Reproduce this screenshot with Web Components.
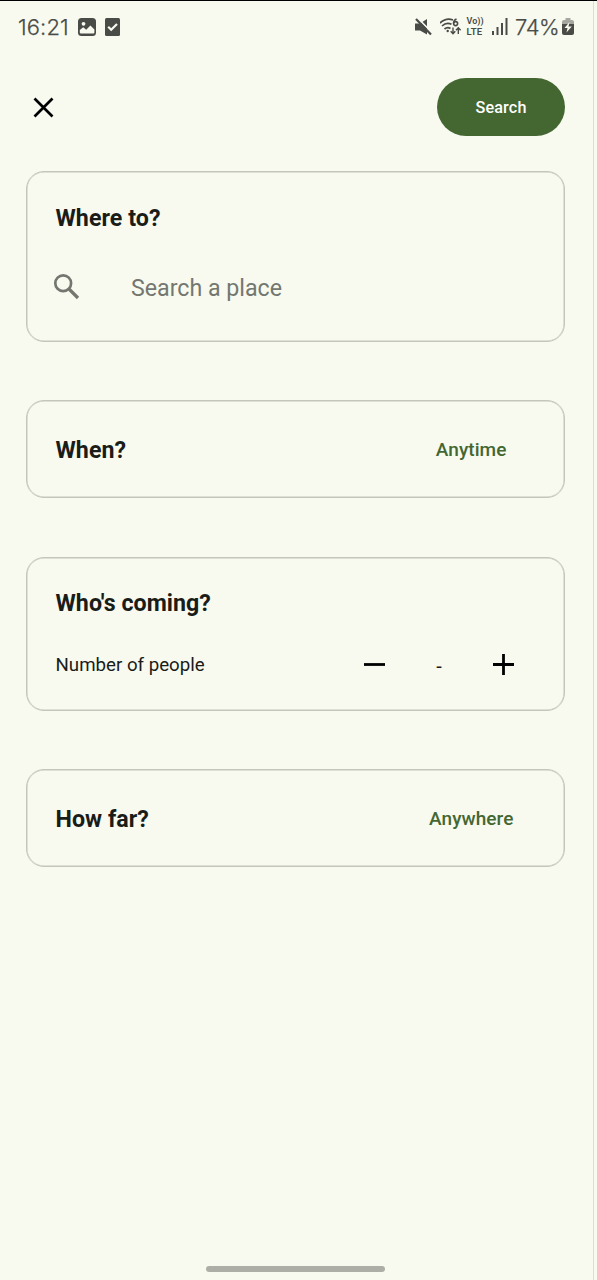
<!DOCTYPE html>
<html lang="en">
<head>
<meta charset="utf-8">
<title>Search</title>
<style>
html,body{margin:0;height:100%;background:#f8faf0}
body{font-family:Roboto,"Noto Sans",sans-serif;color:#1a1c18;overflow:hidden}
</style>
</head>
<body>
<search-screen></search-screen>
<script>
const define = (name, html) => customElements.define(name, class extends HTMLElement {
  constructor() {
    super();
    this.attachShadow({mode: 'open'}).innerHTML = html;
  }
});

define('status-bar', `
<style>
:host{display:flex;align-items:center;height:51px;box-sizing:border-box;padding:0 23px 0 18px;color:#494b46;font:22.5px/26px Inter,sans-serif}
.time{width:51px;margin-right:9px;font-weight:300;white-space:nowrap;font-size:22px;letter-spacing:.1px;-webkit-text-stroke:.25px}
.pct{width:44px;margin-left:7px;margin-right:3px;font-weight:300;white-space:nowrap;font-size:22px;letter-spacing:-.4px;-webkit-text-stroke:.25px}
svg{display:block;flex:none}
.space{flex:1}
.volte{display:flex;flex-direction:column;gap:1px;width:18px;margin-left:3.500px;margin-right:7.500px;font:600 9px/9px Roboto,sans-serif;white-space:nowrap}
.volte span+span{font-size:9.500px;line-height:9px;letter-spacing:.2px}
</style>
<span class="time">16:21</span>
<svg width="18" height="18" viewBox="0 0 18 18"><rect width="18" height="18" rx="3.500" fill="#494b46"/><circle cx="5.500" cy="5.800" r="1.900" fill="#f8faf0"/><path d="M1.800 14.500V12l3.400-2.700 3 2.400L12.400 7.500l4 4v3q0 1-1 1H3q-1.200 0-1.200-1z" fill="#f8faf0"/></svg>
<svg width="15" height="18" viewBox="0 0 15 18" style="margin-left:9px"><rect width="15" height="18" rx="1.500" fill="#494b46"/><path d="M3.200 8.700l3 3L12 6" fill="none" stroke="#f8faf0" stroke-width="2.200"/></svg>
<span class="space"></span>
<svg width="18" height="18" viewBox="0 0 18 18" style="margin-right:1px"><path d="M0 5.500h5L12 1v15.500L5 12.500H0z" fill="#494b46"/><path d="M2.500 0L18 15.500" stroke="#f8faf0" stroke-width="1.600"/><path d="M1 1L16 16.500" stroke="#494b46" stroke-width="2.200"/></svg>
<svg width="22" height="20" viewBox="0 0 22 20" style="margin-left:6px;margin-right:1px" fill="none" stroke="#494b46"><path d="M0 6Q6 .5 13 3M2 9Q6.500 4.800 11.500 7.300M4.500 12Q7.500 9.500 10.500 11.500" stroke-width="1.700"/><circle cx="7.700" cy="14" r="1.200" fill="#494b46" stroke="none"/><circle cx="15.600" cy="6.600" r="2" stroke-width="1.600"/><path d="M16.500 2Q13.500 3 13.600 6.600" stroke-width="1.600"/><path d="M13 10.500v6M10.700 14.200l2.300 2.500 2.300-2.500M18.300 17v-6M16 13.200l2.300-2.500 2.300 2.500" stroke-width="1.400"/></svg>
<span class="volte"><span>Vo))</span><span>LTE</span></span>
<svg width="16" height="17" viewBox="0 0 16 17" fill="#494b46"><path d="M0 13h2v4H0zM4.500 9h2v8h-2zM9 5h2v12H9zM13.500 0h2v17h-2z"/></svg>
<span class="pct">74%</span>
<svg width="12" height="17" viewBox="0 0 12 17"><path d="M3.500 0h5v2H10q2 0 2 2v4H0V4q0-2 2-2h1.500z" fill="#a6a8a0"/><path d="M0 6h12v9q0 2-2 2H2q-2 0-2-2z" fill="#494b46"/><path d="M7.500 4L2.500 10h3l-1 4.500L9.800 8.500H6.500z" fill="#f8faf0"/></svg>
`);

define('pill-button', `
<style>
:host{display:flex;align-items:center;justify-content:center;width:128px;height:58.500px;border-radius:30px;background:#446732;color:#fff;font-size:16.200px;font-weight:500;letter-spacing:.15px}
</style><slot></slot>`);

define('option-card', `
<style>
:host{display:flex;flex-direction:column;box-sizing:border-box;border:1px solid #c3c6bc;box-shadow:inset 0 0 0 .5px #c3c6bc;border-radius:18px;padding:0 28.500px}
h2{margin:0;font-size:23.200px;line-height:28px;font-weight:700;white-space:nowrap;letter-spacing:.05px}
.head{display:flex;align-items:center;justify-content:space-between}
::slotted([slot=action]){color:#446732;font-size:19px;font-weight:500;letter-spacing:.08px;padding-bottom:1px}
</style>
<div class="head"><h2><slot name="title"></slot></h2><slot name="action"></slot></div>
<slot></slot>`);

define('place-field', `
<style>
:host{display:flex;align-items:center;height:36px;margin-top:38px;color:#74776f;font-size:23.200px}
svg{margin-left:-3px;margin-right:51.500px;margin-top:-4px}
</style>
<svg width="27" height="27" viewBox="0 0 27 27" fill="none" stroke="#74776f"><circle cx="10.200" cy="10.200" r="7.900" stroke-width="2.700"/><path d="M15.500 15.500L25 25" stroke-width="3.200"/></svg><span><slot></slot></span>`);

define('people-stepper', `
<style>
:host{display:flex;align-items:center;height:28px;margin-top:33.500px;font-size:18.700px}
.label{flex:1;white-space:nowrap;padding-top:1px}
.count{width:108px;text-align:center;font-size:20px;padding-top:2px}
svg{display:block;margin-right:21.500px}
svg:first-of-type{margin-right:0}
</style>
<span class="label"><slot></slot></span>
<svg width="21" height="21" viewBox="0 0 21 21"><path d="M0 10.500h21" stroke="#000" stroke-width="2.800"/></svg>
<span class="count">-</span>
<svg width="21" height="21" viewBox="0 0 21 21"><path d="M0 10.500h21M10.500 0v21" stroke="#000" stroke-width="2.800"/></svg>`);

define('search-screen', `
<style>
:host{display:flex;flex-direction:column;box-sizing:border-box;height:1280px;width:597px;border-top:1px solid #000;background:linear-gradient(90deg,transparent 593px,#dcded4 593px 594px,transparent 594px)}
.bar{display:flex;align-items:center;justify-content:space-between;padding:0 32px 0 33px;height:58px;margin-top:26px}
main{display:flex;flex-direction:column;padding:0 32px 0 26px;margin-top:35px}
option-card:nth-child(1){height:171px;padding-top:32px}
option-card:nth-child(2),option-card:nth-child(4){height:98px;justify-content:center;padding-top:2px}
option-card:nth-child(3){height:154px;padding-top:31px}
option-card+option-card{margin-top:58px}
option-card:nth-child(3){margin-top:59px}
.anytime{margin-right:29px}.anywhere{margin-right:22px}
.home{width:179px;height:6px;border-radius:3px;background:#adafa7;margin:auto auto 8px 206px}
</style>
<status-bar></status-bar>
<div class="bar"><svg width="21" height="21" viewBox="0 0 21 21"><path d="M1.500 1.500l18 18M19.500 1.500l-18 18" stroke="#000" stroke-width="2.700"/></svg><pill-button>Search</pill-button></div>
<main>
<option-card><span slot="title">Where to?</span><place-field>Search a place</place-field></option-card>
<option-card><span slot="title">When?</span><span slot="action" class="anytime">Anytime</span></option-card>
<option-card><span slot="title">Who's coming?</span><people-stepper>Number of people</people-stepper></option-card>
<option-card><span slot="title">How far?</span><span slot="action" class="anywhere">Anywhere</span></option-card>
</main>
<div class="home"></div>`);
</script>
</body>
</html>
